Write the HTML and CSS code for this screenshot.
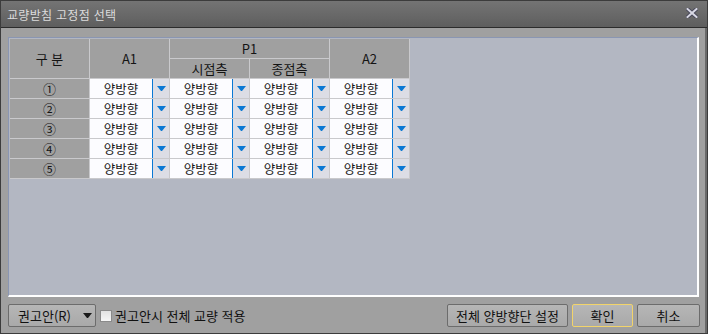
FILE: index.html
```html
<!DOCTYPE html>
<html lang="ko">
<head>
<meta charset="utf-8">
<link rel="stylesheet" href="styles.css">
</head>
<body>
<div class="window">
  <div class="titlebar">
    <span class="title">교량받침 고정점 선택</span>
    <svg class="close" width="12" height="10" viewBox="0 0 12 10">
      <path d="M1.5 1 L10.5 9 M10.5 1 L1.5 9" stroke="#4a4a5a" stroke-width="4" stroke-linecap="square"/>
      <path d="M1.5 1 L10.5 9 M10.5 1 L1.5 9" stroke="#d8d8e4" stroke-width="2" stroke-linecap="square"/>
    </svg>
  </div>
  <div class="body">
    <div class="panel">
      <div class="grid">
        <div class="hd r2">구 분</div>
        <div class="hd r2">A1</div>
        <div class="hd c2">P1</div>
        <div class="hd r2">A2</div>
        <div class="hd">시점측</div>
        <div class="hd">종점측</div>

        <div class="hd num">①</div>
        <div class="dd"><span class="val">양방향</span><span class="btn"><svg width="9" height="5" viewBox="0 0 9 5"><polygon points="0,0 9,0 5,5 4,5" fill="#0a78d4"/></svg></span></div>
        <div class="dd"><span class="val">양방향</span><span class="btn"><svg width="9" height="5" viewBox="0 0 9 5"><polygon points="0,0 9,0 5,5 4,5" fill="#0a78d4"/></svg></span></div>
        <div class="dd"><span class="val">양방향</span><span class="btn"><svg width="9" height="5" viewBox="0 0 9 5"><polygon points="0,0 9,0 5,5 4,5" fill="#0a78d4"/></svg></span></div>
        <div class="dd"><span class="val">양방향</span><span class="btn"><svg width="9" height="5" viewBox="0 0 9 5"><polygon points="0,0 9,0 5,5 4,5" fill="#0a78d4"/></svg></span></div>

        <div class="hd num">②</div>
        <div class="dd"><span class="val">양방향</span><span class="btn"><svg width="9" height="5" viewBox="0 0 9 5"><polygon points="0,0 9,0 5,5 4,5" fill="#0a78d4"/></svg></span></div>
        <div class="dd"><span class="val">양방향</span><span class="btn"><svg width="9" height="5" viewBox="0 0 9 5"><polygon points="0,0 9,0 5,5 4,5" fill="#0a78d4"/></svg></span></div>
        <div class="dd"><span class="val">양방향</span><span class="btn"><svg width="9" height="5" viewBox="0 0 9 5"><polygon points="0,0 9,0 5,5 4,5" fill="#0a78d4"/></svg></span></div>
        <div class="dd"><span class="val">양방향</span><span class="btn"><svg width="9" height="5" viewBox="0 0 9 5"><polygon points="0,0 9,0 5,5 4,5" fill="#0a78d4"/></svg></span></div>

        <div class="hd num">③</div>
        <div class="dd"><span class="val">양방향</span><span class="btn"><svg width="9" height="5" viewBox="0 0 9 5"><polygon points="0,0 9,0 5,5 4,5" fill="#0a78d4"/></svg></span></div>
        <div class="dd"><span class="val">양방향</span><span class="btn"><svg width="9" height="5" viewBox="0 0 9 5"><polygon points="0,0 9,0 5,5 4,5" fill="#0a78d4"/></svg></span></div>
        <div class="dd"><span class="val">양방향</span><span class="btn"><svg width="9" height="5" viewBox="0 0 9 5"><polygon points="0,0 9,0 5,5 4,5" fill="#0a78d4"/></svg></span></div>
        <div class="dd"><span class="val">양방향</span><span class="btn"><svg width="9" height="5" viewBox="0 0 9 5"><polygon points="0,0 9,0 5,5 4,5" fill="#0a78d4"/></svg></span></div>

        <div class="hd num">④</div>
        <div class="dd"><span class="val">양방향</span><span class="btn"><svg width="9" height="5" viewBox="0 0 9 5"><polygon points="0,0 9,0 5,5 4,5" fill="#0a78d4"/></svg></span></div>
        <div class="dd"><span class="val">양방향</span><span class="btn"><svg width="9" height="5" viewBox="0 0 9 5"><polygon points="0,0 9,0 5,5 4,5" fill="#0a78d4"/></svg></span></div>
        <div class="dd"><span class="val">양방향</span><span class="btn"><svg width="9" height="5" viewBox="0 0 9 5"><polygon points="0,0 9,0 5,5 4,5" fill="#0a78d4"/></svg></span></div>
        <div class="dd"><span class="val">양방향</span><span class="btn"><svg width="9" height="5" viewBox="0 0 9 5"><polygon points="0,0 9,0 5,5 4,5" fill="#0a78d4"/></svg></span></div>

        <div class="hd num">⑤</div>
        <div class="dd"><span class="val">양방향</span><span class="btn"><svg width="9" height="5" viewBox="0 0 9 5"><polygon points="0,0 9,0 5,5 4,5" fill="#0a78d4"/></svg></span></div>
        <div class="dd"><span class="val">양방향</span><span class="btn"><svg width="9" height="5" viewBox="0 0 9 5"><polygon points="0,0 9,0 5,5 4,5" fill="#0a78d4"/></svg></span></div>
        <div class="dd"><span class="val">양방향</span><span class="btn"><svg width="9" height="5" viewBox="0 0 9 5"><polygon points="0,0 9,0 5,5 4,5" fill="#0a78d4"/></svg></span></div>
        <div class="dd"><span class="val">양방향</span><span class="btn"><svg width="9" height="5" viewBox="0 0 9 5"><polygon points="0,0 9,0 5,5 4,5" fill="#0a78d4"/></svg></span></div>
      </div>
    </div>
    <div class="footer">
      <div class="left">
        <div class="button combo">권고안(R)<svg width="9" height="5" viewBox="0 0 9 5"><polygon points="0,0 9,0 5,5 4,5" fill="#1a1a1a"/></svg></div>
        <label class="check"><span class="box"></span>권고안시 전체 교량 적용</label>
      </div>
      <div class="right">
        <div class="button wide">전체 양방향단 설정</div>
        <div class="button ok">확인</div>
        <div class="button cancel">취소</div>
      </div>
    </div>
  </div>
</div>
</body>
</html>
```

FILE: styles.css
```css
html, body {
  margin: 0;
  padding: 0;
}
body {
  width: 708px;
  height: 334px;
  overflow: hidden;
  font-family: "Noto Sans CJK KR", "Noto Sans", sans-serif;
  background: #a0a0a0;
}
.window {
  width: 708px;
  height: 334px;
  box-sizing: border-box;
  border: 1px solid #3c3c3c;
  display: flex;
  flex-direction: column;
  background: #a0a0a0;
}
.titlebar {
  height: 26px;
  flex: none;
  display: flex;
  align-items: center;
  justify-content: space-between;
  padding: 0 9px 0 6px;
  background: linear-gradient(#747474, #5e5e5e);
  border-bottom: 1px solid #2c2c2c;
}
.title {
  color: #dcdcdc;
  font-size: 12px;
  letter-spacing: 0.3px;
}
.close {
  display: block;
  margin-top: -2px;
}
.body {
  flex: 1;
  display: flex;
  flex-direction: column;
  padding: 9px 5px 6px 7px;
  border-right: 2px solid #6a6a6a;
  gap: 7px;
  min-height: 0;
}
.panel {
  flex: 1;
  background: #b3b7c2;
  border-top: 1px solid #8a96b2;
  border-left: 1px solid #8a96b2;
  border-right: 2px solid #ffffff;
  border-bottom: 2px solid #ffffff;
  padding: 1px;
  margin-right: 1px;
  min-height: 0;
}
.grid {
  display: grid;
  grid-template-columns: repeat(5, 80px);
  grid-template-rows: repeat(7, 20px);
  width: 400px;
}
.grid > div {
  box-sizing: border-box;
  border-right: 1px solid #c9c9cc;
  border-bottom: 1px solid #c9c9cc;
}
.hd {
  background: #a0a0a0;
  color: #141414;
  font-size: 13px;
  display: flex;
  align-items: center;
  justify-content: center;
}
.r2 { grid-row: span 2; }
.c2 { grid-column: span 2; }
.num { font-size: 13px; }
.dd {
  display: flex;
  background: #fcfcff;
}
.val {
  flex: 1;
  display: flex;
  align-items: center;
  justify-content: center;
  font-size: 12.5px;
  color: #141414;
  border-right: 1px solid #0a78d4;
}
.btn {
  width: 16px;
  background: #dcdde5;
  display: flex;
  align-items: center;
  justify-content: center;
}
.btn svg { display: block; }
.footer {
  height: 23px;
  flex: none;
  display: flex;
  justify-content: space-between;
  align-items: center;
}
.left, .right {
  display: flex;
  align-items: center;
  height: 100%;
}
.right { gap: 4px; }
.button {
  box-sizing: border-box;
  height: 23px;
  border: 1px solid #6c6c6c;
  border-radius: 2px;
  background: linear-gradient(#b6b6b6, #a9a9a9);
  display: flex;
  align-items: center;
  justify-content: center;
  font-size: 13px;
  color: #111;
}
.combo {
  width: 88px;
  justify-content: flex-start;
  padding-left: 9px;
  gap: 12px;
}
.combo svg { display: block; }
.check {
  display: flex;
  align-items: center;
  font-size: 13px;
  color: #111;
  margin-left: 4px;
}
.box {
  width: 10px;
  height: 10px;
  border: 1px solid #8a8a8a;
  background: linear-gradient(#e2e2e2, #f6f6f6);
  margin-right: 3px;
}
.wide { width: 121px; }
.ok {
  width: 61px;
  border-color: #f2d46a;
}
.cancel { width: 63px; }
```
